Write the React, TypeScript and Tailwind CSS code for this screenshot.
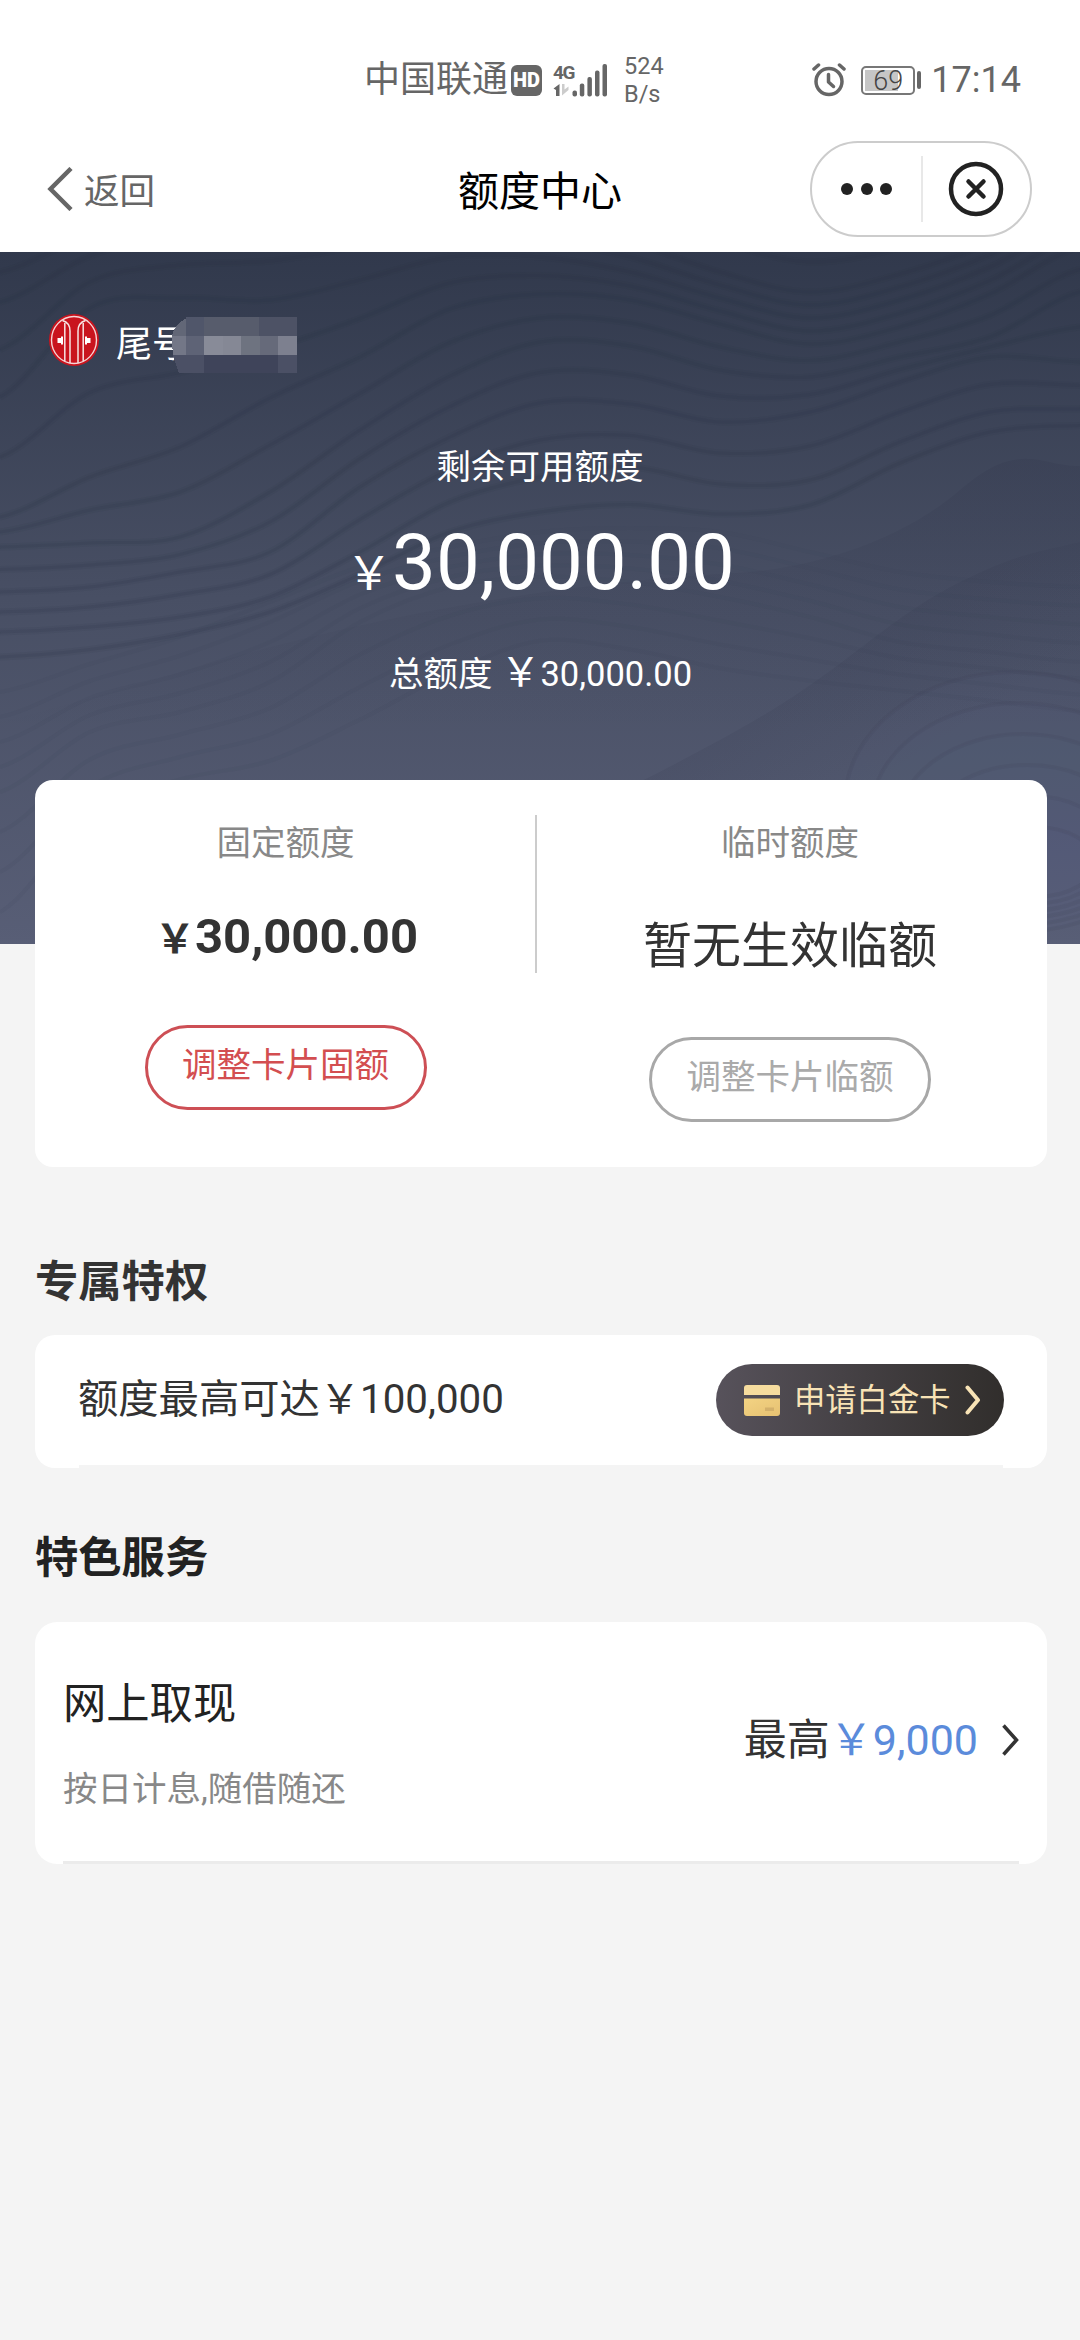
import type { ReactNode } from 'react';

// contour heights sampled every 90px across the hero
const contours = [
  [-10, -40, -60, -70, -80, -90, -100, -70, -40, -20, -30, -50, -90],
  [50, 4, -20, -30, -40, -50, -30, -10, 20, 40, 22, -10, -60],
  [145, 56, 46, 48, 28, 5, 5, 20, 46, 66, 48, 15, -30],
  [265, 225, 195, 146, 105, 57, 42, 48, 72, 92, 75, 42, -5],
  [295, 291, 285, 240, 178, 124, 90, 94, 118, 125, 105, 85, 40],
  [340, 335, 320, 300, 235, 185, 151, 152, 170, 160, 130, 105, 110],
  [380, 375, 365, 345, 300, 250, 225, 215, 232, 228, 190, 160, 157],
  [430, 420, 400, 375, 345, 310, 295, 290, 292, 278, 232, 200, 190],
];

const lowerContours = [
  [440, 412, 385, 350, 315, 295, 280, 276, 280, 300, 320, 330, 335],
  [540, 480, 460, 430, 370, 335, 325, 330, 345, 365, 390, 400, 410],
  [700, 590, 550, 535, 500, 450, 410, 420, 440, 450, 455, 465, 475],
];

const ridge = 'M0 470C120 440 250 395 400 365S660 325 735 321S900 290 960 238S1040 215 1080 214V692H0Z';
const slope = 'M560 570C680 510 740 480 800 440S900 360 960 330S1040 300 1080 290V692H560Z';

function smooth(ys: number[]) {
  const p = (i: number) => ys[Math.max(0, Math.min(ys.length - 1, i))];
  let d = `M0 ${ys[0]}`;
  for (let i = 0; i < ys.length - 1; i++) {
    const x = i * 90;
    const c1 = p(i) + (p(i + 1) - p(i - 1)) / 6;
    const c2 = p(i + 1) - (p(i + 2) - p(i)) / 6;
    d += `C${x + 30} ${c1.toFixed(1)} ${x + 60} ${c2.toFixed(1)} ${x + 90} ${p(i + 1)}`;
  }
  return d;
}

function between(rows: number[][], steps: number) {
  const out: string[] = [];
  for (let r = 0; r < rows.length - 1; r++) {
    for (let s = 0; s < steps; s++) {
      out.push(smooth(rows[r].map((y, i) => y + ((rows[r + 1][i] - y) * s) / steps)));
    }
  }
  return out;
}

function Waves() {
  return (
    <svg viewBox="0 0 1080 692" className="absolute inset-0 w-full h-full" fill="none">
      <defs>
        <linearGradient id="ridge" x1="0" y1="214" x2="0" y2="480" gradientUnits="userSpaceOnUse">
          <stop offset="0" stopColor="#2c3046" stopOpacity="0.16" />
          <stop offset="1" stopColor="#2c3046" stopOpacity="0" />
        </linearGradient>
        <linearGradient id="slope" x1="860" y1="390" x2="930" y2="500" gradientUnits="userSpaceOnUse">
          <stop offset="0" stopColor="#2c3046" stopOpacity="0.12" />
          <stop offset="1" stopColor="#2c3046" stopOpacity="0" />
        </linearGradient>
      </defs>
      <g stroke="#2a2f44">
        {between(contours, 2).map((d, i) => (
          <g key={i}>
            <path d={d} strokeWidth="7" strokeOpacity="0.08" />
            <path d={d} strokeWidth="3" strokeOpacity="0.14" />
          </g>
        ))}
      </g>
      <path d={ridge} fill="url(#ridge)" />
      <g stroke="#3a4058" strokeOpacity="0.1" strokeWidth="4">
        {between(lowerContours, 4).map((d, i) => (
          <path key={i} d={d} />
        ))}
      </g>
      <path d={slope} fill="url(#slope)" />
      <g stroke="#3a4058" strokeOpacity="0.13" strokeWidth="4">
        {[0, 1, 2, 3, 4, 5].map((i) => (
          <ellipse key={i} cx={1015 + i * 4} cy={550 + i * 12} rx={170 - i * 22} ry={130 - i * 19} fill="#5d6482" fillOpacity="0.1" />
        ))}
      </g>
    </svg>
  );
}

function StatusBar() {
  return (
    <div className="flex items-center h-[126px] pt-[34px] pl-[364px] pr-[59px] text-[#666]">
      <span className="text-[36px] leading-[40px]">中国联通</span>
      <span className="ml-[3px] w-[31px] h-[31px] rounded-[6px] bg-[#666] text-white text-[20px] leading-[31px] font-black text-center">HD</span>
      <div className="ml-[11px] flex items-end">
        <div className="w-[20px] flex flex-col">
          <span className="text-[19px] leading-[20px] font-bold tracking-[-1.5px] whitespace-nowrap">4G</span>
          <svg width="18" height="14" viewBox="0 0 18 14" fill="#666">
            <path d="M0.500 5.500L6.500 1V13H3V7Z" />
            <path d="M9 1h2.500v5.500l4-3v3.500l-6.500 5.500Z" fill="#ccc" />
          </svg>
        </div>
        <svg width="36" height="34" viewBox="0 0 36 34" className="-ml-[2px]" fill="#666">
          <rect x="1.500" y="27.500" width="4.500" height="6" rx="2" />
          <rect x="8.800" y="20.500" width="4.500" height="13" rx="2" />
          <rect x="16.400" y="14" width="4.500" height="19.500" rx="2" />
          <rect x="24" y="7.500" width="4.500" height="26" rx="2" />
          <rect x="31.500" y="1" width="4.500" height="32.500" rx="2" />
        </svg>
      </div>
      <div className="ml-[17px] text-[23.5px] leading-[28px]">
        <p>524</p>
        <p>B/s</p>
      </div>
      <svg width="34" height="34" viewBox="0 0 34 34" className="ml-auto" fill="none" stroke="#666" strokeLinecap="round" strokeLinejoin="round">
        <circle cx="17" cy="18.500" r="13" strokeWidth="3.500" />
        <path d="M16.500 11.500v7.500l5 4.500" strokeWidth="3.500" />
        <path d="M2 6L6.500 2M32 6L27.500 2" strokeWidth="3.500" />
      </svg>
      <div className="ml-[15px] relative w-[54px] h-[29px] rounded-[5px] border-2 border-[#777] p-[2px]">
        <div className="w-[33px] h-full bg-[#c6c6c6]" />
        <span className="absolute inset-0 text-center text-[27px] leading-[26px] font-light text-[#444]">69</span>
      </div>
      <div className="ml-[2px] w-[4px] h-[18px] rounded-[2px] bg-[#666]" />
      <span className="ml-[10px] text-[36px] leading-[40px]">17:14</span>
    </div>
  );
}

function NavBar() {
  return (
    <div className="grid grid-cols-3 items-center h-[126px]">
      <div className="flex items-center pl-[47px] text-[#666]">
        <svg width="26" height="44" viewBox="0 0 26 44" fill="none" stroke="#666" strokeWidth="4.500">
          <path d="M24 1.500L3.500 22L24 42.500" />
        </svg>
        <span className="ml-[11px] mt-[6px] text-[35.5px] leading-[40px]">返回</span>
      </div>
      <h1 className="mt-[5px] text-center text-[41px] leading-[48px] text-black">额度中心</h1>
      <div className="flex justify-end pr-[48px]">
        <div className="flex items-center w-[222px] h-[96px] rounded-full border-2 border-[#ccc]">
          <div className="flex flex-1 items-center justify-center gap-[7.5px] pl-[1px] h-[66px] border-r-2 border-[#e8e8e8]">
            <span className="w-[12px] h-[12px] rounded-full bg-[#222]" />
            <span className="w-[12px] h-[12px] rounded-full bg-[#222]" />
            <span className="w-[12px] h-[12px] rounded-full bg-[#222]" />
          </div>
          <div className="flex flex-1 justify-center">
            <svg width="56" height="56" viewBox="0 0 56 56" fill="none" stroke="#222" strokeLinecap="round">
              <circle cx="28" cy="28" r="25" strokeWidth="4.500" />
              <path d="M20.500 20.500l15 15M35.500 20.500l-15 15" strokeWidth="4.500" />
            </svg>
          </div>
        </div>
      </div>
    </div>
  );
}

function BankLogo() {
  return (
    <svg width="50" height="52" viewBox="0 0 50 52" fill="none">
      <ellipse cx="25" cy="26" rx="25" ry="26" fill="#c9141e" />
      <ellipse cx="25" cy="26" rx="22.500" ry="23.500" stroke="#f6d5d6" strokeWidth="1.400" />
      <g stroke="#f6e3e3" strokeWidth="1.500">
        <path d="M13.500 6.500C18.500 8 21 12 21 17V49" />
        <path d="M36.500 6.500C31.500 8 29 12 29 17V49" />
        <path d="M15.800 9V47M34.200 9V47" />
      </g>
      <path d="M8.500 24h3.500v-1.500h2v8h-2v-1.500h-3.500ZM41.500 24h-3.500v-1.500h-2v8h2v-1.500h3.500Z" fill="#fff" />
    </svg>
  );
}

function MaskedNumber() {
  return (
    <svg width="126" height="56" viewBox="0 0 126 56" className="-ml-[16px]" shapeRendering="crispEdges">
      <path d="M14.500 1C6 5 1 13 0 19L5 37L7 55.500H15V1Z" fill="#626777" />
      <path d="M0 19H15V37.500H1C0 31 0 25 0 19Z" fill="#737787" />
      <path d="M1 37.500H33V56H7C5 50 2 43 1 37.500Z" fill="#4b5065" />
      <rect x="14" y="0" width="18" height="19" fill="#50566a" />
      <rect x="32" y="0" width="55" height="19" fill="#575c6c" />
      <rect x="87" y="0" width="38" height="19" fill="#4d5265" />
      <rect x="14" y="19" width="18" height="19" fill="#5e6376" />
      <rect x="32" y="19" width="19" height="19" fill="#888b98" />
      <rect x="51" y="19" width="18" height="19" fill="#858895" />
      <rect x="69" y="19" width="19" height="19" fill="#6e7380" />
      <rect x="88" y="19" width="18" height="19" fill="#666a7a" />
      <rect x="106" y="19" width="19" height="19" fill="#7d808f" />
      <rect x="32" y="38" width="74" height="18" fill="#3f445a" />
      <rect x="106" y="38" width="19" height="18" fill="#4b5065" />
    </svg>
  );
}

function Hero() {
  return (
    <section className="relative h-[692px] bg-linear-to-b from-[#31394c] via-[#484f64] to-[#585e76] text-white">
      <Waves />
      <div className="relative pt-[62px]">
        <div className="flex items-start h-[58px] pl-[49px]">
          <BankLogo />
          <div className="flex items-start pt-[3px] pl-[17px]">
            <span className="mt-[8px] text-[36px] leading-[40px] whitespace-nowrap">尾号</span>
            <MaskedNumber />
          </div>
        </div>
        <p className="mt-[75px] text-center text-[34.5px] leading-[40px]">剩余可用额度</p>
        <div className="mt-[36px] h-[80px] flex items-baseline justify-center pl-[1px] leading-[80px]">
          <span className="text-[46px]">￥</span>
          <span className="text-[78px]">30,000.00</span>
        </div>
        <div className="mt-[50px] flex items-baseline justify-center pl-[1px] text-[34.5px] leading-[40px]">
          <span>总额度</span>
          <span className="ml-[8px] text-[40px]">￥</span>
          <span>30,000.00</span>
        </div>
      </div>
    </section>
  );
}

function QuotaCard() {
  return (
    <section className="relative -mt-[164px] mx-[35px] w-[1012px] h-[387px] rounded-[18px] bg-white flex">
      <div className="w-[500px] pl-[1px] flex flex-col items-center pt-[43px]">
        <p className="text-[34.5px] leading-[40px] text-[#888]">固定额度</p>
        <div className="mt-[49px] h-[50px] flex items-baseline pl-[2px] leading-[50px] font-bold text-[#333]">
          <span className="text-[40px]">￥</span>
          <span className="text-[49px]">30,000.00</span>
        </div>
        <button className="mt-[63px] w-[282px] h-[85px] pb-[3px] rounded-full border-3 border-[#cd4f55] text-[34.5px] text-[#d34e50]">
          调整卡片固额
        </button>
      </div>
      <div className="mt-[35px] w-[2px] h-[158px] bg-[#ccc]" />
      <div className="w-[506px] flex flex-col items-center pt-[43px]">
        <p className="text-[34.5px] leading-[40px] text-[#888]">临时额度</p>
        <p className="mt-[59px] text-[49px] leading-[50px] text-[#333]">暂无生效临额</p>
        <button className="mt-[65px] w-[282px] h-[85px] pb-[3px] rounded-full border-3 border-[#a8a8a8] text-[34.5px] text-[#aaa]">
          调整卡片临额
        </button>
      </div>
    </section>
  );
}

function SectionTitle({ children, className }: { children: ReactNode; className: string }) {
  return <h2 className={`px-[35px] text-[43.300px] leading-[50px] font-bold ${className}`}>{children}</h2>;
}

function PrivilegeCard() {
  return (
    <section className="mt-[27px] mx-[35px] w-[1012px] h-[133px] rounded-[20px] bg-white flex flex-col justify-between">
      <div className="flex items-center justify-between h-[130px] px-[43px]">
        <div className="flex items-baseline text-[40.300px] leading-[46px] text-[#333]">
          <span>额度最高可达￥</span>
          <span>100,000</span>
        </div>
        <button className="flex items-center w-[288px] h-[72px] pl-[28px] rounded-full bg-linear-to-r from-[#57525b] to-[#312e2c] text-[#f8e3b6]">
          <svg width="36" height="31" viewBox="0 0 36 31">
            <defs>
              <linearGradient id="gold" x1="0" y1="0" x2="1" y2="1">
                <stop offset="0" stopColor="#f3d383" />
                <stop offset="1" stopColor="#e6c172" />
              </linearGradient>
            </defs>
            <path d="M3 0H33Q36 0 36 3V10H0V3Q0 0 3 0Z" fill="#f6dc9e" />
            <path d="M0 13.500H36V28Q36 31 33 31H3Q0 31 0 28Z" fill="url(#gold)" />
            <rect x="21" y="22.500" width="9" height="3.500" fill="#d3b06a" />
          </svg>
          <span className="ml-[14px] mt-[1px] text-[31.300px] leading-[40px]">申请白金卡</span>
          <svg width="16" height="30" viewBox="0 0 16 30" className="ml-[14px]" fill="none" stroke="#f8e3b6" strokeWidth="4" strokeLinecap="round" strokeLinejoin="round">
            <path d="M2.500 2.500L13 15L2.500 27.500" />
          </svg>
        </button>
      </div>
      <div className="mx-[44px] h-[3px] bg-[#f4f4f4]" />
    </section>
  );
}

function ServiceCard() {
  return (
    <section className="mt-[38px] mx-[35px] w-[1012px] h-[242px] rounded-[22px] bg-white flex flex-col justify-between">
      <div className="flex items-start justify-between pl-[28px] pr-[28px]">
        <div className="pt-[58px]">
          <p className="text-[43.300px] leading-[50px] text-[#222]">网上取现</p>
          <p className="mt-[39px] text-[34.5px] leading-[40px] text-[#888]">按日计息,随借随还</p>
        </div>
        <div className="flex items-center pt-[93px] text-[43px] leading-[50px]">
          <span className="text-[#333]">最高</span>
          <span className="text-[#5b8bdb]">￥9,000</span>
          <svg width="17" height="32" viewBox="0 0 17 32" className="ml-[24px]" fill="none" stroke="#333" strokeWidth="3.500">
            <path d="M1.500 1.500L14.500 16L1.500 30.500" />
          </svg>
        </div>
      </div>
      <div className="mx-[28px] h-[3px] bg-[#ebebeb]" />
    </section>
  );
}

export default function App() {
  return (
    <div className="w-[1080px] h-[2340px] overflow-hidden bg-[#f4f4f4] font-[Roboto,'Noto_Sans_CJK_SC',sans-serif]">
      <header className="bg-white">
        <StatusBar />
        <NavBar />
      </header>
      <Hero />
      <QuotaCard />
      <SectionTitle className="mt-[91px] text-[#333]">专属特权</SectionTitle>
      <PrivilegeCard />
      <SectionTitle className="mt-[66px] text-[#222]">特色服务</SectionTitle>
      <ServiceCard />
    </div>
  );
}
